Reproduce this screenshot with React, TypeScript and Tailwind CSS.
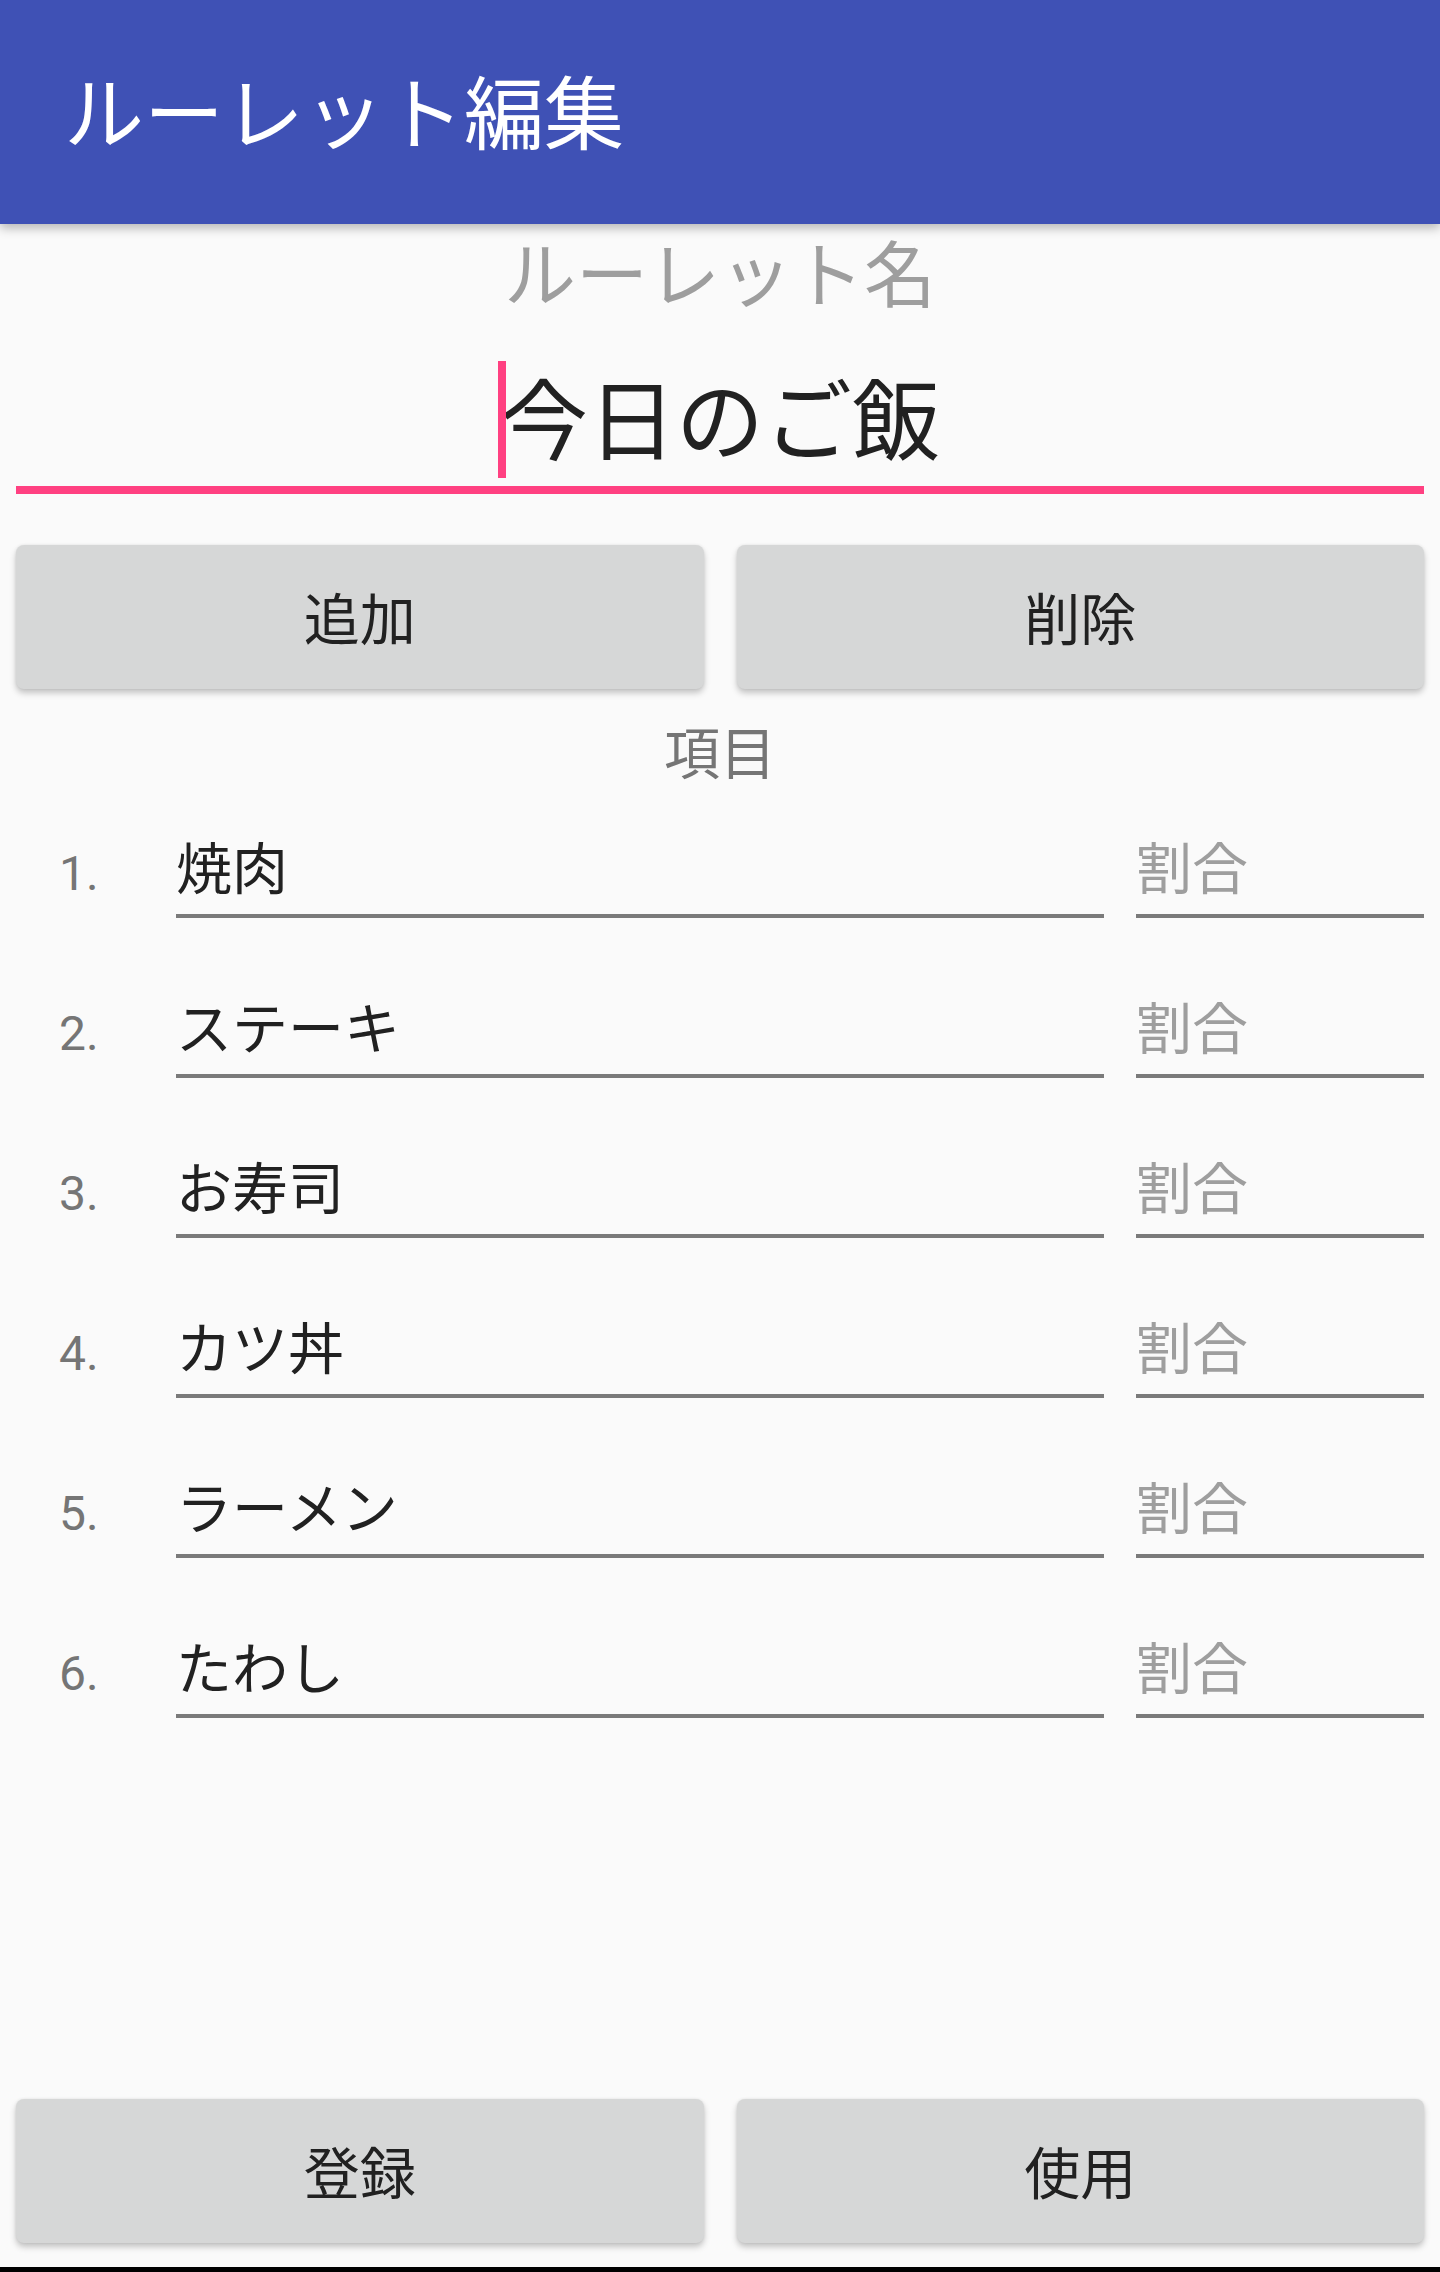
import React from "react";

const items = ["焼肉", "ステーキ", "お寿司", "カツ丼", "ラーメン", "たわし"];

const RaisedButton = ({ label }: { label: string }) => (
  <button className="flex-1 h-[144px] pt-[8px] rounded-[8px] bg-[#d6d7d7] text-[56px] leading-none text-[#212121] shadow-[0_4px_6px_rgba(0,0,0,0.22),0_0_3px_rgba(0,0,0,0.08)] flex items-center justify-center">
    {label}
  </button>
);

export default function App() {
  return (
    <div
      className="w-[1440px] h-[2272px] bg-[#fafafa] flex flex-col overflow-hidden"
      style={{ fontFamily: 'Roboto, "Noto Sans CJK JP", sans-serif' }}
    >
      {/* toolbar */}
      <div className="relative z-10 h-[224px] shrink-0 bg-[#3f51b5] pl-[64px] pt-[8px] flex items-center shadow-[0_4px_10px_rgba(0,0,0,0.28)]">
        <span className="text-[80px] leading-none text-white">ルーレット編集</span>
      </div>

      {/* roulette name */}
      <div className="h-[100px] pt-[6px] flex items-center justify-center">
        <span className="text-[72px] leading-none text-[#9e9e9e]">ルーレット名</span>
      </div>
      <div className="mx-[16px] pt-[38px] pb-[8px] border-b-[8px] border-[#ff4081]">
        <div className="h-[116px] flex items-center justify-center">
          <span className="relative top-[3px] text-[88px] leading-none text-[#212121]">
            <span className="absolute left-[-2px] top-[-18px] w-[8px] h-[117px] bg-[#ff4081]" />
            今日のご飯
          </span>
        </div>
      </div>

      {/* add / delete */}
      <div className="mt-[51px] px-[16px] flex gap-[33px]">
        <RaisedButton label="追加" />
        <RaisedButton label="削除" />
      </div>

      <div className="mt-[38px] text-center text-[56px] leading-none text-[#757575]">項目</div>

      {/* rows */}
      <div className="mt-[59px] flex flex-col gap-[84px]">
        {items.map((item, i) => (
          <div key={i} className="pl-[59px] pr-[16px] flex items-end gap-[32px]">
            <div className="w-[85px] mb-[20px] text-[48px] leading-none text-[#757575]">{i + 1}.</div>
            <div className="flex-1 pb-[16px] border-b-4 border-[#7a7a7a] text-[56px] leading-none text-[#212121]">
              {item}
            </div>
            <div className="w-[288px] pb-[16px] border-b-4 border-[#7a7a7a] text-[56px] leading-none text-[#9e9e9e]">
              割合
            </div>
          </div>
        ))}
      </div>

      {/* register / use */}
      <div className="mt-auto px-[16px] flex gap-[33px]">
        <RaisedButton label="登録" />
        <RaisedButton label="使用" />
      </div>
      <div className="h-[24px] shrink-0" />
      <div className="h-[5px] shrink-0 bg-black" />
    </div>
  );
}
